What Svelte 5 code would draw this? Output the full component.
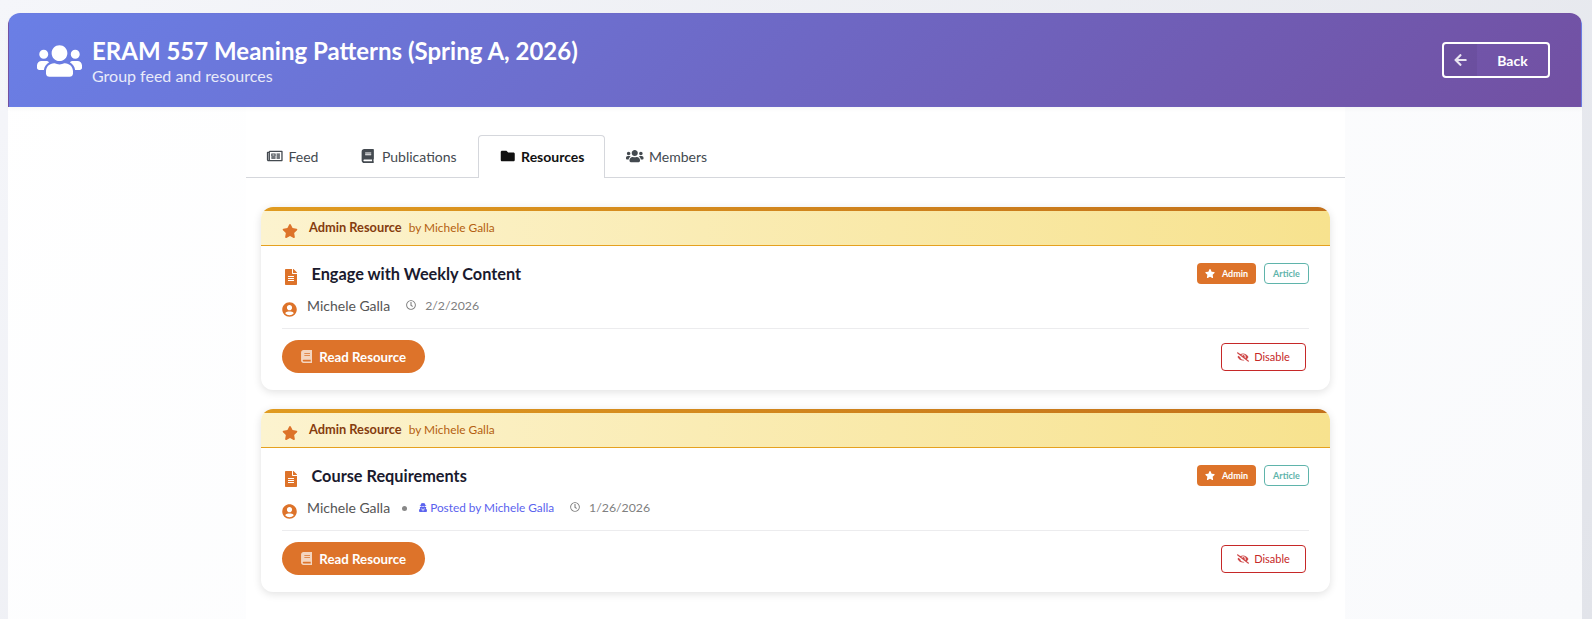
<script>
  const ICONS = {
    users: ['0 0 640 512', 'M96 224c35.3 0 64-28.7 64-64s-28.7-64-64-64-64 28.7-64 64 28.7 64 64 64zm448 0c35.3 0 64-28.7 64-64s-28.7-64-64-64-64 28.7-64 64 28.7 64 64 64zm32 32h-64c-17.6 0-33.5 7.1-45.1 18.6 40.3 22.1 68.9 62 75.1 109.4h66c17.7 0 32-14.3 32-32v-32c0-35.3-28.7-64-64-64zm-256 0c61.9 0 112-50.1 112-112S381.9 32 320 32 208 82.1 208 144s50.1 112 112 112zm76.8 32h-8.3c-20.8 10-43.9 16-68.5 16s-47.6-6-68.5-16h-8.3C179.6 288 128 339.6 128 403.2V432c0 26.5 21.5 48 48 48h288c26.5 0 48-21.5 48-48v-28.8c0-63.6-51.6-115.2-115.2-115.2zm-223.7-13.4C161.5 263.1 145.6 256 128 256H64c-35.3 0-64 28.7-64 64v32c0 17.7 14.3 32 32 32h65.9c6.3-47.4 34.9-87.3 75.2-109.4z'],
    star: ['0 0 576 512', 'M259.3 17.8L194 150.2 47.9 171.5c-26.2 3.8-36.7 36.1-17.7 54.6l105.7 103-25 145.5c-4.5 26.3 23.2 46 46.4 33.7L288 439.6l130.7 68.7c23.2 12.2 50.9-7.4 46.4-33.7l-25-145.5 105.7-103c19-18.5 8.5-50.8-17.7-54.6L382 150.2 316.7 17.8c-11.7-23.6-45.6-23.9-57.4 0z'],
    file: ['0 0 384 512', 'M224 136V0H24C10.7 0 0 10.7 0 24v464c0 13.3 10.7 24 24 24h336c13.3 0 24-10.7 24-24V160H248c-13.2 0-24-10.8-24-24zm64 236c0 6.6-5.4 12-12 12H108c-6.6 0-12-5.4-12-12v-8c0-6.6 5.4-12 12-12h168c6.6 0 12 5.4 12 12v8zm0-64c0 6.6-5.4 12-12 12H108c-6.6 0-12-5.4-12-12v-8c0-6.6 5.4-12 12-12h168c6.6 0 12 5.4 12 12v8zm0-72v8c0 6.6-5.4 12-12 12H108c-6.6 0-12-5.4-12-12v-8c0-6.6 5.4-12 12-12h168c6.6 0 12 5.4 12 12zm96-114.1v6.1H256V0h6.1c6.4 0 12.5 2.5 17 7l97.9 98c4.5 4.5 7 10.6 7 16.9z'],
    userCircle: ['0 0 496 512', 'M248 8C111 8 0 119 0 256s111 248 248 248 248-111 248-248S385 8 248 8zm0 96c48.6 0 88 39.4 88 88s-39.4 88-88 88-88-39.4-88-88 39.4-88 88-88zm0 344c-58.7 0-111.3-26.6-146.5-68.2 18.8-35.4 55.6-59.8 98.5-59.8 2.4 0 4.8.4 7.1 1.1 13 4.2 26.6 6.9 40.9 6.9 14.3 0 28-2.7 40.9-6.9 2.3-.7 4.7-1.1 7.1-1.1 42.9 0 79.7 24.4 98.5 59.8C359.3 421.4 306.7 448 248 448z'],
    clock: ['0 0 512 512', 'M256 8C119 8 8 119 8 256s111 248 248 248 248-111 248-248S393 8 256 8zm0 448c-110.5 0-200-89.5-200-200S145.5 56 256 56s200 89.5 200 200-89.5 200-200 200zm61.8-104.4l-84.9-61.7c-3.1-2.3-4.9-5.9-4.9-9.7V116c0-6.6 5.4-12 12-12h32c6.6 0 12 5.4 12 12v141.7l66.8 48.6c5.4 3.9 6.5 11.4 2.6 16.8L334.6 349c-3.9 5.3-11.4 6.5-16.8 2.6z'],
    book: ['0 0 448 512', 'M448 360V24c0-13.3-10.7-24-24-24H96C43 0 0 43 0 96v320c0 53 43 96 96 96h328c13.3 0 24-10.7 24-24v-16c0-7.5-3.5-14.3-8.9-18.7-4.2-15.4-4.2-59.3 0-74.7 5.4-4.3 8.9-11.1 8.9-18.6zM128 134c0-3.3 2.7-6 6-6h212c3.3 0 6 2.7 6 6v20c0 3.3-2.7 6-6 6H134c-3.3 0-6-2.7-6-6v-20zm0 64c0-3.3 2.7-6 6-6h212c3.3 0 6 2.7 6 6v20c0 3.3-2.7 6-6 6H134c-3.3 0-6-2.7-6-6v-20zm253.4 250H96c-17.7 0-32-14.3-32-32 0-17.6 14.4-32 32-32h285.4c-1.9 17.1-1.9 46.9 0 64z'],
    folder: ['0 0 512 512', 'M464 128H272l-64-64H48C21.49 64 0 85.49 0 112v288c0 26.51 21.49 48 48 48h416c26.51 0 48-21.49 48-48V176c0-26.51-21.49-48-48-48z'],
    news: ['0 0 576 512', 'M552 64H112c-20.858 0-38.643 13.377-45.248 32H24c-13.255 0-24 10.745-24 24v272c0 30.928 25.072 56 56 56h496c13.255 0 24-10.745 24-24V88c0-13.255-10.745-24-24-24zM48 392V144h16v248c0 4.411-3.589 8-8 8s-8-3.589-8-8zm480 8H111.422c.374-2.614.578-5.283.578-8V112h416v288zM172 280h136c6.627 0 12-5.373 12-12v-96c0-6.627-5.373-12-12-12H172c-6.627 0-12 5.373-12 12v96c0 6.627 5.373 12 12 12zm28-80h80v40h-80v-40zm-40 140v-24c0-6.627 5.373-12 12-12h136c6.627 0 12 5.373 12 12v24c0 6.627-5.373 12-12 12H172c-6.627 0-12-5.373-12-12zm192 0v-24c0-6.627 5.373-12 12-12h104c6.627 0 12 5.373 12 12v24c0 6.627-5.373 12-12 12H364c-6.627 0-12-5.373-12-12zm0-144v-24c0-6.627 5.373-12 12-12h104c6.627 0 12 5.373 12 12v24c0 6.627-5.373 12-12 12H364c-6.627 0-12-5.373-12-12zm0 72v-24c0-6.627 5.373-12 12-12h104c6.627 0 12 5.373 12 12v24c0 6.627-5.373 12-12 12H364c-6.627 0-12-5.373-12-12z'],
    eyeSlash: ['0 0 640 512', 'M320 400c-75.85 0-137.25-58.71-142.9-133.11L72.2 185.82c-13.79 17.3-26.48 35.59-36.72 55.59a32.35 32.35 0 0 0 0 29.19C89.71 376.41 197.07 448 320 448c26.91 0 52.87-4 77.89-10.46L346 397.39a144.13 144.13 0 0 1-26 2.61zm313.82 58.1l-110.55-85.44a331.25 331.25 0 0 0 81.25-102.07 32.35 32.35 0 0 0 0-29.19C550.29 135.59 442.93 64 320 64a308.15 308.15 0 0 0-147.32 37.7L45.46 3.37A16 16 0 0 0 23 6.18L3.37 31.45A16 16 0 0 0 6.18 53.9l588.36 454.73a16 16 0 0 0 22.46-2.81l19.64-25.27a16 16 0 0 0-2.82-22.45zm-183.72-142l-39.3-30.38A94.75 94.75 0 0 0 416 256a94.76 94.76 0 0 0-121.31-92.21A47.65 47.65 0 0 1 304 192a46.64 46.64 0 0 1-1.54 10l-73.61-56.89A142.31 142.31 0 0 1 320 112a143.92 143.92 0 0 1 144 144c0 21.63-5.29 41.79-13.9 60.11z'],
    arrow: ['0 0 448 512', 'M257.5 445.1l-22.2 22.2c-9.4 9.4-24.6 9.4-33.9 0L7 273c-9.4-9.4-9.4-24.6 0-33.9L201.4 44.7c9.4-9.4 24.6-9.4 33.9 0l22.2 22.2c9.5 9.5 9.3 25-.4 34.3L136.6 216H424c13.3 0 24 10.7 24 24v32c0 13.3-10.7 24-24 24H136.6l120.5 114.8c9.8 9.3 10 24.8.4 34.3z'],
    secret: ['0 0 448 512', 'M383.9 308.3l23.9-62.6c4-10.5-3.7-21.7-15-21.7h-58.5c11-18.9 17.8-40.6 17.8-64v-.3c39.2-7.8 64-19.1 64-31.7 0-13.3-27.3-25.1-70.1-33-9.2-32.8-27-65.8-40.6-82.8-9.5-11.9-25.9-15.6-39.5-8.8l-27.6 13.8c-9 4.5-19.6 4.5-28.6 0L182.1 3.4c-13.6-6.8-30-3.1-39.5 8.8-13.5 17-31.4 50-40.6 82.8-42.7 7.9-70 19.7-70 33 0 12.6 24.8 23.9 64 31.7v.3c0 23.4 6.8 45.1 17.8 64H56.3c-11.5 0-19.2 11.7-14.7 22.3l25.8 60.2C27.3 329.8 0 372.7 0 422.4v44.8C0 491.9 20.1 512 44.8 512h358.4c24.7 0 44.8-20.1 44.8-44.8v-44.8c0-48.4-25.8-90.4-64.1-114.1zM176 480l-41.6-192 49.6 32 24 40-32 120zm96 0l-32-120 24-40 49.6-32L272 480zm41.7-298.5c-3.9 11.9-7 24.6-16.5 33.4-10.1 9.3-48 22.4-64-25-2.8-8.4-15.4-8.4-18.3 0-17 50.2-56 32.4-64 25-9.5-8.8-12.7-21.5-16.5-33.4-.8-2.5-6.3-5.7-6.3-5.8v-10.8c28.3 3.6 61 5.8 96 5.8s67.7-2.2 96-5.8v10.8c-.1.1-5.6 3.2-6.4 5.8z']
  };
  const tabs = [
    { label: 'Feed', icon: 'news' },
    { label: 'Publications', icon: 'book' },
    { label: 'Resources', icon: 'folder', active: true },
    { label: 'Members', icon: 'users' }
  ];
  const resources = [
    { title: 'Engage with Weekly Content', date: '2/2/2026', posted: null },
    { title: 'Course Requirements', date: '1/26/2026', posted: 'Posted by Michele Galla' }
  ];
</script>

{#snippet icon(name, cls)}
  <svg class="ic {cls}" viewBox={ICONS[name][0]} aria-hidden="true"><path d={ICONS[name][1]} /></svg>
{/snippet}

<div class="page">
  <div class="shell">
    <header class="hero">
      <div class="hero-left">
        {@render icon('users', 'hero-ic')}
        <div>
          <h1>ERAM 557 Meaning Patterns (Spring A, 2026)</h1>
          <p>Group feed and resources</p>
        </div>
      </div>
      <button class="back">
        <span class="back-ic">{@render icon('arrow', 'arrow-ic')}</span>
        <span class="back-label">Back</span>
      </button>
    </header>

    <main class="content">
      <div class="container">
        <nav class="tabs">
          {#each tabs as t}
            <div class="tab" class:active={t.active}>
              {@render icon(t.icon, 'tab-ic')}
              <span>{t.label}</span>
            </div>
          {/each}
        </nav>

        <div class="list">
          {#each resources as r}
            <article class="card">
              <div class="accent"></div>
              <div class="banner">
                {@render icon('star', 'banner-star')}
                <strong>Admin Resource</strong>
                <span>by Michele Galla</span>
              </div>
              <div class="body">
                <div class="title-row">
                  {@render icon('file', 'file-ic')}
                  <h2>{r.title}</h2>
                  <div class="badges">
                    <span class="badge admin">{@render icon('star', 'badge-star')}Admin</span>
                    <span class="badge article">Article</span>
                  </div>
                </div>
                <div class="meta">
                  {@render icon('userCircle', 'user-ic')}
                  <span class="author">Michele Galla</span>
                  {#if r.posted}
                    <span class="dot"></span>
                    <span class="posted">{@render icon('secret', 'secret-ic')}{r.posted}</span>
                  {/if}
                  <span class="date">{@render icon('clock', 'clock-ic')}{r.date}</span>
                </div>
                <div class="actions">
                  <button class="read">{@render icon('book', 'read-ic')}Read Resource</button>
                  <button class="disable">{@render icon('eyeSlash', 'eye-ic')}Disable</button>
                </div>
              </div>
            </article>
          {/each}
        </div>
      </div>
    </main>
  </div>
</div>

<style>
  :global(body) {
    margin: 0;
    background: #eceef3;
  }
  .page {
    height: 619px;
    overflow: hidden;
    padding: 13px 10px 0 8px;
    box-sizing: border-box;
    background: linear-gradient(135deg, #f5f6fa, #e2e4ea);
    font-family: Lato, sans-serif;
  }
  .shell {
    height: 606px;
    background: linear-gradient(135deg, #ffffff, #f9fafc);
    border-radius: 12px 12px 0 0;
  }
  .ic {
    fill: currentColor;
    display: block;
    flex: none;
  }
  .hero {
    height: 94px;
    box-sizing: border-box;
    padding: 0 31px 0 28px;
    display: flex;
    align-items: center;
    justify-content: space-between;
    border: 1px solid transparent;
    background: linear-gradient(135deg, #6a7fe6 0%, #7250a2 100%);
    border-radius: 12px 12px 0 0;
    color: #fff;
    box-shadow: 0 2px 4px rgba(0, 0, 0, 0.04);
    position: relative;
  }
  .hero-left {
    display: flex;
    align-items: center;
    gap: 10px;
  }
  :global(.hero-ic) {
    width: 45px;
    height: 36px;
    margin-top: 2px;
  }
  h1 {
    margin: 0;
    font-size: 24px;
    font-weight: 700;
    line-height: 29px;
  }
  .hero p {
    margin: 2px 0 0;
    font-size: 16px;
    line-height: 18px;
    opacity: 0.85;
  }
  .back {
    display: flex;
    align-items: center;
    width: 108px;
    height: 36px;
    padding: 0;
    box-sizing: border-box;
    background: transparent;
    border: 2px solid #fff;
    border-radius: 4px;
    color: #fff;
    font: 700 14px Lato, sans-serif;
    overflow: hidden;
  }
  .back-ic {
    width: 33px;
    height: 100%;
    display: flex;
    align-items: center;
    justify-content: center;
    background: rgba(0, 0, 0, 0.05);
    color: rgba(255, 255, 255, 0.85);
  }
  :global(.arrow-ic) {
    width: 13px;
    height: 14px;
  }
  .back-label {
    flex: 1;
    text-align: center;
  }
  .content {
    padding-left: 238px;
  }
  .container {
    width: 1099px;
    height: 512px;
    background: #fff;
    padding-top: 28px;
  }
  .tabs {
    display: flex;
    height: 42px;
    border-bottom: 1px solid #d5d7dc;
  }
  .tab {
    display: flex;
    align-items: center;
    gap: 5px;
    height: 42px;
    box-sizing: border-box;
    padding: 0 20px 1px;
    font-size: 14px;
    color: #444a50;
    border: 1px solid transparent;
    border-bottom: 0;
    border-radius: 4px 4px 0 0;
  }
  .tab:first-child {
    padding-left: 19px;
    padding-right: 19px;
  }
  .tab.active {
    font-weight: 700;
    color: #111;
    background: #fff;
    border-color: #d5d7dc;
    height: 43px;
    padding-bottom: 2px;
  }
  :global(.tab-ic) {
    width: 17.5px;
    height: 14px;
  }
  .list {
    padding: 29px 15px 0;
    display: flex;
    flex-direction: column;
    gap: 19px;
  }
  .card {
    height: 183px;
    background: #fff;
    border-radius: 12px;
    box-shadow: 0 2px 8px rgba(0, 0, 0, 0.12);
    overflow: hidden;
  }
  .accent {
    height: 4px;
    background: linear-gradient(90deg, #e09b20, #c2701a);
  }
  .banner {
    height: 35px;
    box-sizing: border-box;
    border-bottom: 1px solid #e5a11f;
    background: linear-gradient(90deg, #fcf3cf, #f7e28e);
    padding: 0 21px 2px;
    display: flex;
    align-items: center;
    font-size: 11.9px;
    color: #b45f10;
  }
  .banner strong {
    color: #853c0e;
    font-size: 12.8px;
    font-weight: 700;
    margin-right: 7px;
  }
  :global(.banner-star) {
    width: 16px;
    height: 14px;
    color: #dd732a;
    margin: 8px 11px 0 0;
  }
  .body {
    padding: 17px 21px;
  }
  .title-row {
    display: flex;
    align-items: flex-start;
    height: 32px;
  }
  :global(.file-ic) {
    width: 12px;
    height: 16px;
    color: #dd732a;
    margin: 6px 14.5px 0 3px;
  }
  h2 {
    margin: 0;
    font-size: 16.3px;
    font-weight: 700;
    line-height: 21px;
    color: #1a1a2e;
    flex: 1;
  }
  .badges {
    display: flex;
    gap: 8px;
  }
  .badge {
    height: 21px;
    box-sizing: border-box;
    display: flex;
    align-items: center;
    border-radius: 4px;
    font-size: 9px;
    font-weight: 700;
  }
  .admin {
    width: 59px;
    justify-content: center;
    gap: 7px;
    background: #dd732a;
    color: #fff;
  }
  :global(.badge-star) {
    width: 10px;
    height: 9px;
  }
  .article {
    width: 45px;
    justify-content: center;
    background: #fff;
    color: #5fb4ab;
    border: 1px solid #5fb4ab;
  }
  .meta {
    display: flex;
    align-items: center;
    height: 20px;
    font-size: 14px;
    color: #555;
    border-bottom: 1px solid #ececee;
    padding-bottom: 13px;
  }
  :global(.user-ic) {
    width: 15px;
    height: 15px;
    color: #dd732a;
    margin: 8px 10px 0 0;
  }
  .dot {
    width: 5px;
    height: 5px;
    border-radius: 50%;
    background: #888;
    margin: 2px 12px 0 11.5px;
  }
  .posted {
    display: flex;
    align-items: center;
    gap: 3.5px;
    font-size: 11.8px;
    color: #5a62ee;
  }
  :global(.secret-ic) {
    width: 8px;
    height: 9px;
    margin-top: 1px;
  }
  .date {
    display: flex;
    align-items: center;
    gap: 9px;
    font-size: 12.3px;
    color: #808080;
    margin-left: 16px;
  }
  :global(.clock-ic) {
    width: 10px;
    height: 10px;
  }
  .actions {
    display: flex;
    align-items: center;
    justify-content: space-between;
    padding-top: 11px;
  }
  .read {
    display: flex;
    align-items: center;
    gap: 7px;
    height: 33px;
    width: 143px;
    justify-content: center;
    border: 0;
    border-radius: 17px;
    background: #dd732a;
    color: #fff;
    font: 700 13.25px Lato, sans-serif;
  }
  :global(.read-ic) {
    width: 11.5px;
    height: 13px;
    opacity: 0.7;
  }
  .disable {
    display: flex;
    align-items: center;
    justify-content: center;
    gap: 5px;
    width: 85px;
    height: 28px;
    margin-right: 3px;
    background: #fff;
    border: 1px solid #c62828;
    border-radius: 4px;
    color: #c62828;
    font: 400 11px Lato, sans-serif;
  }
  :global(.eye-ic) {
    width: 12px;
    height: 10px;
    opacity: 0.85;
  }
</style>
